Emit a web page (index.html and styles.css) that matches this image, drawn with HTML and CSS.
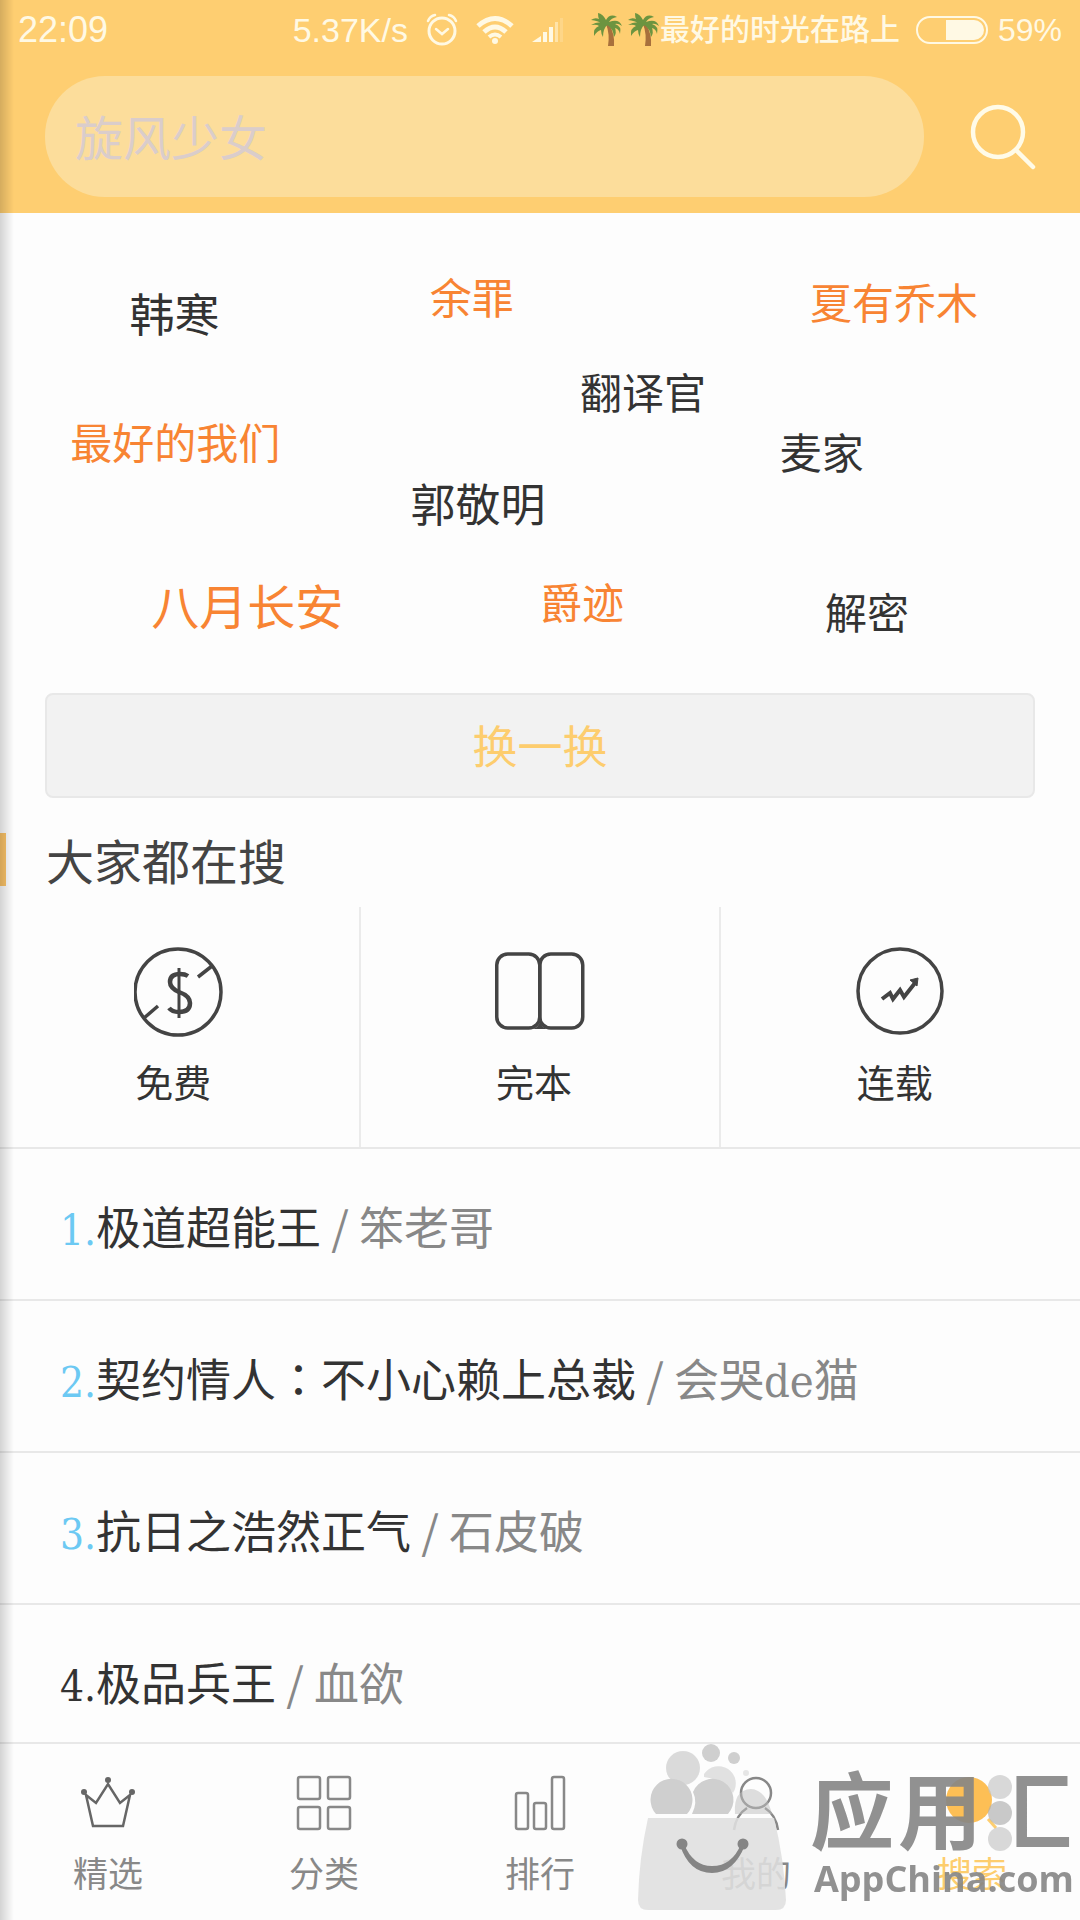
FILE: index.html
```html
<!DOCTYPE html>
<html lang="zh-CN">
<head>
    <meta charset="UTF-8">
    <meta name="viewport" content="width=device-width, initial-scale=1.0">
    <title>搜索</title>
    <link rel="stylesheet" href="styles.css">
</head>
<body>
    <header class="header">
        <div class="status-bar">
            <span class="status-time">22:09</span>
            <span class="status-speed">5.37K/s</span>
            <svg class="icon-alarm" width="32" height="34" viewBox="0 0 32 34" fill="none" stroke="currentColor" stroke-width="3" stroke-linecap="round">
                <circle cx="16" cy="18" r="13"/>
                <path d="M10 16l6 5 6-5" stroke-width="2.5"/>
                <path d="M2 8q2-5 7-6M30 8q-2-5-7-6" stroke-width="2.5"/>
            </svg>
            <svg class="icon-wifi" width="38" height="30" viewBox="0 0 38 30" fill="none" stroke="currentColor" stroke-width="5">
                <path d="M2 11q17-15 34 0"/>
                <path d="M8 17q11-10 22 0"/>
                <path d="M13 22q6-5 12 0" stroke-width="4"/>
                <circle cx="19" cy="26" r="3" fill="currentColor" stroke="none"/>
            </svg>
            <svg class="icon-signal" width="32" height="26" viewBox="0 0 32 26" fill="currentColor">
                <path d="M0 25l9-6v6z"/>
                <rect x="11" y="15" width="4" height="10"/>
                <rect x="17" y="10" width="4" height="15"/>
                <rect x="23" y="5" width="3" height="20" opacity=".5"/>
                <rect x="28" y="1" width="3" height="24" opacity=".2"/>
            </svg>
            <svg class="icon-palm" width="70" height="36" viewBox="0 0 70 36">
                <defs>
                    <g id="palm">
                        <path d="M16 12q4 10 2 22h6q1-12-5-22z" fill="#a8703c"/>
                        <path d="M17 12Q9 8 1 13q6-1 8 1-6 2-5 10 3-5 7-6 0 4 2 7 0-8 4-12 6 3 7 12 3-4 1-9 4 1 5 6 2-8-5-10 3-1 7 2-3-8-13-4 2-4 8-5-7-4-11 3-3-6-8-7 0 4 1 6-4-2-8 1 6 0 16 6z" fill="#6c9440"/>
                    </g>
                </defs>
                <use href="#palm"/>
                <use href="#palm" x="37"/>
            </svg>
            <span class="status-carrier">最好的时光在路上</span>
            <svg class="icon-battery" width="72" height="28" viewBox="0 0 72 28">
                <rect x="1" y="1" width="70" height="26" rx="13" fill="none" stroke="currentColor" stroke-width="2"/>
                <path d="M30 4h28a10 10 0 0 1 0 20H30z" fill="currentColor"/>
            </svg>
            <span class="status-power">59%</span>
        </div>

        <form class="search-form">
            <input class="search-input" type="text" placeholder="旋风少女" aria-label="搜索书名或作者">
            <button class="search-button" type="button" aria-label="搜索">
                <svg width="66" height="66" viewBox="0 0 66 66" fill="none" stroke="currentColor" stroke-width="4.5" stroke-linecap="round">
                    <circle cx="28" cy="28" r="25"/>
                    <path d="M46 46l17 17"/>
                </svg>
            </button>
        </form>
    </header>

    <main>
        <!-- 热门标签 -->
        <div class="tag-cloud">
            <a href="#" class="tag tag-1 medium">韩寒</a>
            <a href="#" class="tag tag-2 hot">余罪</a>
            <a href="#" class="tag tag-3 hot">夏有乔木</a>
            <a href="#" class="tag tag-4">翻译官</a>
            <a href="#" class="tag tag-5 hot">最好的我们</a>
            <a href="#" class="tag tag-6">麦家</a>
            <a href="#" class="tag tag-7 medium">郭敬明</a>
            <a href="#" class="tag tag-8 hot large">八月长安</a>
            <a href="#" class="tag tag-9 hot">爵迹</a>
            <a href="#" class="tag tag-10">解密</a>
        </div>

        <button class="refresh-button" type="button">换一换</button>

        <h2 class="section-title">大家都在搜</h2>

        <div class="categories">
            <a href="#" class="category">
                <svg width="90" height="90" viewBox="0 0 90 90" fill="none" stroke="currentColor" stroke-width="3.5">
                    <circle cx="44" cy="45" r="43"/>
                    <path d="M64 30l14-11M10 71l14-12"/>
                    <path d="M45 21v50" stroke-width="3"/>
                    <path d="M54 29q-3-2-8-2-10 0-10 8 0 6 9 10 11 4 11 11 0 9-11 9-7 0-10-4" stroke-width="4.5"/>
                </svg>
                <span class="category-name">免费</span>
            </a>
            <a href="#" class="category">
                <svg width="90" height="90" viewBox="0 0 90 90" fill="none" stroke="currentColor" stroke-width="3.5">
                    <rect x="1.75" y="7" width="43" height="74" rx="11"/>
                    <rect x="44.75" y="7" width="43" height="74" rx="11"/>
                    <path d="M36 82q8-1 9-8 1 7 9 8z" fill="currentColor" stroke="none"/>
                </svg>
                <span class="category-name">完本</span>
            </a>
            <a href="#" class="category">
                <svg width="90" height="90" viewBox="0 0 90 90" fill="none" stroke="currentColor" stroke-width="3.5">
                    <circle cx="44" cy="44" r="42"/>
                    <path d="M26 52l8-6 3 6 7-9 4 7 11-14" stroke-width="4"/>
                    <path d="M62 31l-1 8-7-6z" fill="currentColor" stroke-width="1"/>
                </svg>
                <span class="category-name">连载</span>
            </a>
        </div>

        <div class="book-list">
            <a href="#" class="book"><span class="book-rank top">1.</span><span class="book-name">极道超能王</span> / <span class="book-author">笨老哥</span></a>
            <a href="#" class="book"><span class="book-rank top">2.</span><span class="book-name">契约情人<span class="colon" lang="zh-TW">：</span>不小心赖上总裁</span> / <span class="book-author">会哭de猫</span></a>
            <a href="#" class="book"><span class="book-rank top">3.</span><span class="book-name">抗日之浩然正气</span> / <span class="book-author">石皮破</span></a>
            <a href="#" class="book"><span class="book-rank">4.</span><span class="book-name">极品兵王</span> / <span class="book-author">血欲</span></a>
        </div>
    </main>

    <nav class="tab-bar">
        <a href="#" class="tab">
            <svg width="56" height="56" viewBox="0 0 56 56" fill="none" stroke="#666" stroke-width="2.5">
                <path d="M6 20l10 8L28 9l12 19 10-8-7 31H13z"/>
                <g fill="#666" stroke="none">
                    <circle cx="28" cy="5" r="3"/>
                    <circle cx="4" cy="17" r="3"/>
                    <circle cx="52" cy="17" r="3"/>
                </g>
            </svg>
            <span>精选</span>
        </a>
        <a href="#" class="tab">
            <svg width="56" height="56" viewBox="0 0 56 56" fill="none" stroke="currentColor" stroke-width="2.5">
                <rect x="2" y="2" width="22" height="22" rx="2"/>
                <rect x="32" y="2" width="22" height="22" rx="2"/>
                <rect x="2" y="32" width="22" height="22" rx="2"/>
                <rect x="32" y="32" width="22" height="22" rx="2"/>
            </svg>
            <span>分类</span>
        </a>
        <a href="#" class="tab">
            <svg width="56" height="56" viewBox="0 0 56 56" fill="none" stroke="currentColor" stroke-width="2.5">
                <rect x="4" y="18" width="12" height="36" rx="2"/>
                <rect x="22" y="28" width="12" height="26" rx="2"/>
                <rect x="40" y="2" width="12" height="52" rx="2"/>
            </svg>
            <span>排行</span>
        </a>
        <a href="#" class="tab">
            <svg width="56" height="56" viewBox="0 0 56 56" fill="none" stroke="currentColor" stroke-width="2.5">
                <circle cx="28" cy="18" r="15"/>
                <path d="M6 55q2-15 13-22M50 55q-2-15-13-22"/>
            </svg>
            <span>我的</span>
        </a>
        <a href="#" class="tab active">
            <svg width="56" height="56" viewBox="0 0 56 56">
                <circle cx="25" cy="25" r="23" fill="#fdbf55"/>
                <path d="M44 44l8 9" stroke="#fdce70" stroke-width="3"/>
            </svg>
            <span>搜索</span>
        </a>
    </nav>

    <!-- 应用汇水印 -->
    <svg class="watermark" width="450" height="180" viewBox="0 0 450 180">
        <defs>
            <clipPath id="hui-right">
                <rect x="386" y="0" width="64" height="130"/>
            </clipPath>
        </defs>
        <g fill="#bdbdbd" opacity=".72">
            <circle cx="81" cy="13" r="9"/>
            <circle cx="104" cy="18" r="6"/>
            <circle cx="116" cy="33" r="3" opacity=".5"/>
            <circle cx="53" cy="28" r="17" opacity=".75"/>
            <path d="M74 34a17 17 0 0 1 29 19q-2-3-6-3-9-12-23-13z" opacity=".6"/>
            <path d="M26 74a21 21 0 1 1 31 0z"/>
            <path d="M62 74q6-12 1-22a21 21 0 1 1 35 22z"/>
            <path d="M105 74q-2-24 16-25 15 1 21 25z" opacity=".7"/>
        </g>
        <path d="M18 78h126q10 40 12 82 0 10-10 10H18q-10 0-10-10 1-42 10-82z" fill="#dfdfdf" fill-opacity=".88"/>
        <g fill="#858585">
            <circle cx="52" cy="104" r="5.5"/>
            <circle cx="113" cy="104" r="5.5"/>
            <path d="M50 105q9 28 32 28 22 0 33-28l-4-1q-9 22-29 22-19 0-28-22z"/>
        </g>
        <g fill="#c4c4c4" fill-opacity=".65">
            <circle cx="370" cy="47" r="12"/>
            <circle cx="370" cy="73" r="12" fill="#adadad"/>
            <circle cx="370" cy="99" r="12"/>
        </g>
        <g class="watermark-name">
            <text x="180" y="103">应</text>
            <text x="268" y="103">用</text>
            <text x="358" y="103" clip-path="url(#hui-right)">汇</text>
        </g>
        <text class="watermark-site" x="184" y="152">AppChina.com</text>
    </svg>

    <div class="edge-shadow"></div>
</body>
</html>
```
FILE: styles.css
```css
* {
    box-sizing: border-box;
}

body {
    margin: 0;
    font-family: "Noto Sans CJK SC", sans-serif;
    background-color: #fdfdfd;
    color: #333;
}

a {
    color: inherit;
    text-decoration: none;
}

svg {
    display: block;
    flex-shrink: 0;
}

/* 顶部 */
.header {
    background-color: #fece71;
}

.status-bar {
    display: flex;
    align-items: center;
    height: 60px;
    padding: 0 18px;
    color: #fff9e4;
    font-family: "Liberation Sans", "Noto Sans CJK SC", sans-serif;
    font-size: 34px;
    line-height: 60px;
    white-space: nowrap;
}

.status-time {
    font-size: 36px;
}

.status-speed {
    margin-left: auto;
}

.icon-alarm,
.icon-wifi,
.icon-signal {
    margin-left: 18px;
}

.icon-palm {
    margin-left: 26px;
}

.status-carrier {
    font-size: 30px;
    font-weight: 500;
}

.icon-battery {
    margin: 0 10px 0 16px;
}

.status-power {
    font-size: 32px;
}

.search-form {
    display: flex;
    align-items: center;
    padding: 16px 44px 16px 45px;
}

.search-input {
    flex: 1;
    min-width: 0;
    height: 121px;
    padding: 0 30px 4px;
    border: none;
    border-radius: 60px;
    outline: none;
    background-color: #fcdd9b;
    color: #333;
    font-family: inherit;
    font-size: 48px;
}

.search-input::placeholder {
    color: #dacdcb;
    opacity: 1;
}

.search-button {
    margin-left: 46px;
    padding: 0;
    border: none;
    background: none;
    color: #fffbe8;
    cursor: pointer;
}

/* 标签云 */
.tag-cloud {
    position: relative;
    height: 480px;
}

.tag {
    position: absolute;
    font-size: 42px;
    line-height: 60px;
    white-space: nowrap;
}

.tag.hot {
    color: #f88433;
}

.tag.medium {
    font-size: 45px;
}

.tag.large {
    font-size: 48px;
}

.tag-1 { left: 12%; top: 70px; }
.tag-2 { left: 39.8%; top: 53px; }
.tag-3 { left: 75%; top: 58px; }
.tag-4 { left: 53.7%; top: 148px; }
.tag-5 { left: 6.5%; top: 198px; }
.tag-6 { left: 72.2%; top: 208px; }
.tag-7 { left: 38%; top: 260px; }
.tag-8 { left: 14%; top: 361px; }
.tag-9 { left: 50%; top: 358px; }
.tag-10 { left: 76.4%; top: 368px; }

.refresh-button {
    display: block;
    width: calc(100% - 90px);
    height: 105px;
    margin: 0 auto;
    padding: 0 0 2px;
    border: 2px solid #e8e8e8;
    border-radius: 8px;
    background-color: #f2f2f2;
    color: #fdcd6e;
    font-family: inherit;
    font-size: 45px;
    cursor: pointer;
}

.section-title {
    margin: 35px 0 21px;
    padding-left: 40px;
    border-left: 6px solid #fdc569;
    color: #444;
    font-size: 48px;
    font-weight: 400;
    line-height: 53px;
}

/* 分类入口 */
.categories {
    display: flex;
    border-bottom: 2px solid #e8e8e8;
}

.category {
    flex: 1;
    display: flex;
    flex-direction: column;
    align-items: center;
    padding: 40px 0 41px;
    border-right: 2px solid #ebebeb;
}

.category:last-child {
    border-right: none;
}

.category svg {
    color: #444;
}

.category-name {
    margin-top: 19px;
    padding-right: 12px;
    font-size: 38px;
    line-height: 50px;
}

/* 排行列表 */
.book {
    display: block;
    height: 152px;
    padding-left: 60px;
    border-bottom: 2px solid #e8e8e8;
    color: #888;
    font-size: 45px;
    line-height: 154px;
    white-space: nowrap;
    overflow: hidden;
}

.book-rank {
    color: #333;
    font-family: "DejaVu Serif Condensed", "DejaVu Serif", serif;
    font-size: 42px;
}

.book-rank.top {
    color: #6cc9f3;
}

.book-name {
    color: #333;
}

.colon {
    font-family: "Noto Sans CJK TC", sans-serif;
}

.book-author {
    font-family: "DejaVu Serif Condensed", "Noto Sans CJK SC", sans-serif;
}

/* 底部导航 */
.tab-bar {
    position: fixed;
    left: 0;
    right: 0;
    bottom: 0;
    display: flex;
    height: 178px;
    border-top: 2px solid #e8e8e8;
    background-color: #fdfdfd;
}

.tab {
    flex: 1;
    display: flex;
    flex-direction: column;
    align-items: center;
    padding-top: 31px;
    color: #888;
    font-size: 35px;
    line-height: 50px;
}

.tab svg {
    margin-bottom: 16px;
}

.tab.active {
    color: #fdcd6e;
}

.watermark {
    position: fixed;
    right: 0;
    bottom: 0;
    pointer-events: none;
}

.watermark-name {
    fill: #858585;
    fill-opacity: 0.9;
    font-size: 84px;
    font-weight: 700;
}

.watermark-site {
    fill: #858585;
    fill-opacity: 0.9;
    font-family: "Open Sans", sans-serif;
    font-size: 36px;
    font-weight: 700;
}

/* 左侧页面阴影 */
.edge-shadow {
    position: fixed;
    left: 0;
    top: 0;
    bottom: 0;
    width: 14px;
    background: linear-gradient(to right, rgba(0, 0, 0, 0.16), rgba(0, 0, 0, 0));
    pointer-events: none;
}
```
